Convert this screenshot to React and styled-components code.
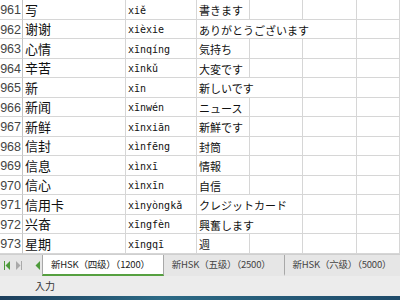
import React from "react";
import styled, { createGlobalStyle } from "styled-components";

//Data
const rows = [
  { n: 961, zh: "写", py: "xiě", ja: "書きます", span: 1 },
  { n: 962, zh: "谢谢", py: "xièxie", ja: "ありがとうございます", span: 3 },
  { n: 963, zh: "心情", py: "xīnqíng", ja: "気持ち", span: 1 },
  { n: 964, zh: "辛苦", py: "xīnkǔ", ja: "大変です", span: 1 },
  { n: 965, zh: "新", py: "xīn", ja: "新しいです", span: 2 },
  { n: 966, zh: "新闻", py: "xīnwén", ja: "ニュース", span: 1 },
  { n: 967, zh: "新鲜", py: "xīnxiān", ja: "新鮮です", span: 1 },
  { n: 968, zh: "信封", py: "xìnfēng", ja: "封筒", span: 1 },
  { n: 969, zh: "信息", py: "xìnxī", ja: "情報", span: 1 },
  { n: 970, zh: "信心", py: "xìnxīn", ja: "自信", span: 1 },
  { n: 971, zh: "信用卡", py: "xìnyòngkǎ", ja: "クレジットカード", span: 2 },
  { n: 972, zh: "兴奋", py: "xīngfèn", ja: "興奮します", span: 2 },
  { n: 973, zh: "星期", py: "xīngqī", ja: "週", span: 1 },
];

const tabs = [
  { label: "新HSK（四级）（1200）", active: true },
  { label: "新HSK（五级）（2500）" },
  { label: "新HSK（六级）（5000）" },
];

//Styles
const GlobalStyle = createGlobalStyle`
  body {
    margin: 0;
    overflow: hidden;
    background: #fff;
  }
`;

const Window = styled.div`
  width: 400px;
  height: 300px;
  display: flex;
  flex-direction: column;
  overflow: hidden;
`;

const Sheet = styled.div`
  display: grid;
  grid-template-columns: 23px 103px 71px 53px 53px 54px 1fr;
  grid-auto-rows: 19.5px;
`;

const Cell = styled.div`
  display: flex;
  align-items: flex-end;
  border-right: 1px solid #d6d6d6;
  border-bottom: 1px solid #d6d6d6;
  overflow: visible;
  white-space: nowrap;
  color: #111;
  grid-column: span ${(p) => p.span || 1};
`;

const RowHead = styled(Cell)`
  justify-content: flex-end;
  padding: 0 1px 2px 0;
  font-family: "Liberation Sans", Arial, sans-serif;
  font-size: 12.5px;
  line-height: 1;
  color: #444;
  border-right-color: #c4c4c4;
`;

const Hanzi = styled(Cell)`
  padding: 0 0 1px 2px;
  font-family: "Noto Sans CJK SC", sans-serif;
  font-size: 13px;
  line-height: 1.2;
`;

const Pinyin = styled(Cell)`
  padding: 0 0 3px 2px;
  font-family: "DejaVu Sans Mono", monospace;
  font-size: 10px;
  line-height: 1;
`;

const Japanese = styled(Cell)`
  padding: 0 0 1px 2px;
  font-family: "Noto Sans CJK JP", sans-serif;
  font-size: 11px;
  line-height: 1.3;
`;

const TabBar = styled.div`
  display: flex;
  align-items: stretch;
  height: 22px;
  background: #e6e6e6;
  border-top: 1px solid #cfcfcf;
  box-sizing: border-box;
  overflow: hidden;
`;

const NavButtons = styled.div`
  width: 42px;
  flex-shrink: 0;
  display: flex;
  align-items: center;
  gap: 4px;
  padding-left: 4px;
  box-sizing: border-box;
`;

const Tab = styled.div`
  display: flex;
  align-items: center;
  flex-shrink: 0;
  padding: 0 13px 0 8px;
  font-family: "Noto Sans CJK SC", sans-serif;
  font-size: 9.5px;
  letter-spacing: -0.2px;
  color: ${(p) => (p.active ? "#222" : "#444")};
  background: ${(p) => (p.active ? "#fff" : "#e6e6e6")};
  border-left: ${(p) => (p.active ? "1px solid #a8a8a8" : "none")};
  border-right: 1px solid #a8a8a8;
  border-bottom: 2px solid ${(p) => (p.active ? "#56a040" : "transparent")};
  white-space: nowrap;
`;

const StatusBar = styled.div`
  flex: 1;
  display: flex;
  align-items: center;
  padding-left: 35px;
  background: #ececec;
  font-family: "Noto Sans CJK JP", sans-serif;
  font-size: 10px;
  color: #333;
`;

const Taskbar = styled.div`
  height: 4px;
  background: linear-gradient(90deg, #1d3f5c, #2c6a85 40%, #1f4b6a);
`;

const NavIcon = ({ dir, bar, color }) => (
  <svg width="7" height="9" viewBox="0 0 7 9">
    {bar && <rect x={dir === "left" ? 0 : 6} y="0" width="1" height="9" fill={color} />}
    {dir === "left" ? (
      <path d="M6 0 L1.5 4.5 L6 9 Z" fill={color} />
    ) : (
      <path d="M1 0 L5.5 4.5 L1 9 Z" fill={color} />
    )}
  </svg>
);

const App = () => {
  return (
    <Window>
      <GlobalStyle />
      <Sheet>
        {rows.map((r) => (
          <React.Fragment key={r.n}>
            <RowHead>{r.n}</RowHead>
            <Hanzi>{r.zh}</Hanzi>
            <Pinyin>{r.py}</Pinyin>
            <Japanese span={r.span}>{r.ja}</Japanese>
            {Array.from({ length: 4 - r.span }).map((_, i) => (
              <Cell key={i} />
            ))}
          </React.Fragment>
        ))}
      </Sheet>
      <TabBar>
        <NavButtons>
          <NavIcon dir="left" bar color="#4d9a3a" />
          <NavIcon dir="right" bar color="#a9a9a9" />
          <span style={{ width: 4 }} />
          <NavIcon dir="left" color="#4d9a3a" />
        </NavButtons>
        {tabs.map((t) => (
          <Tab key={t.label} active={t.active}>
            {t.label}
          </Tab>
        ))}
      </TabBar>
      <StatusBar>入力</StatusBar>
      <Taskbar />
    </Window>
  );
};

export default App;
